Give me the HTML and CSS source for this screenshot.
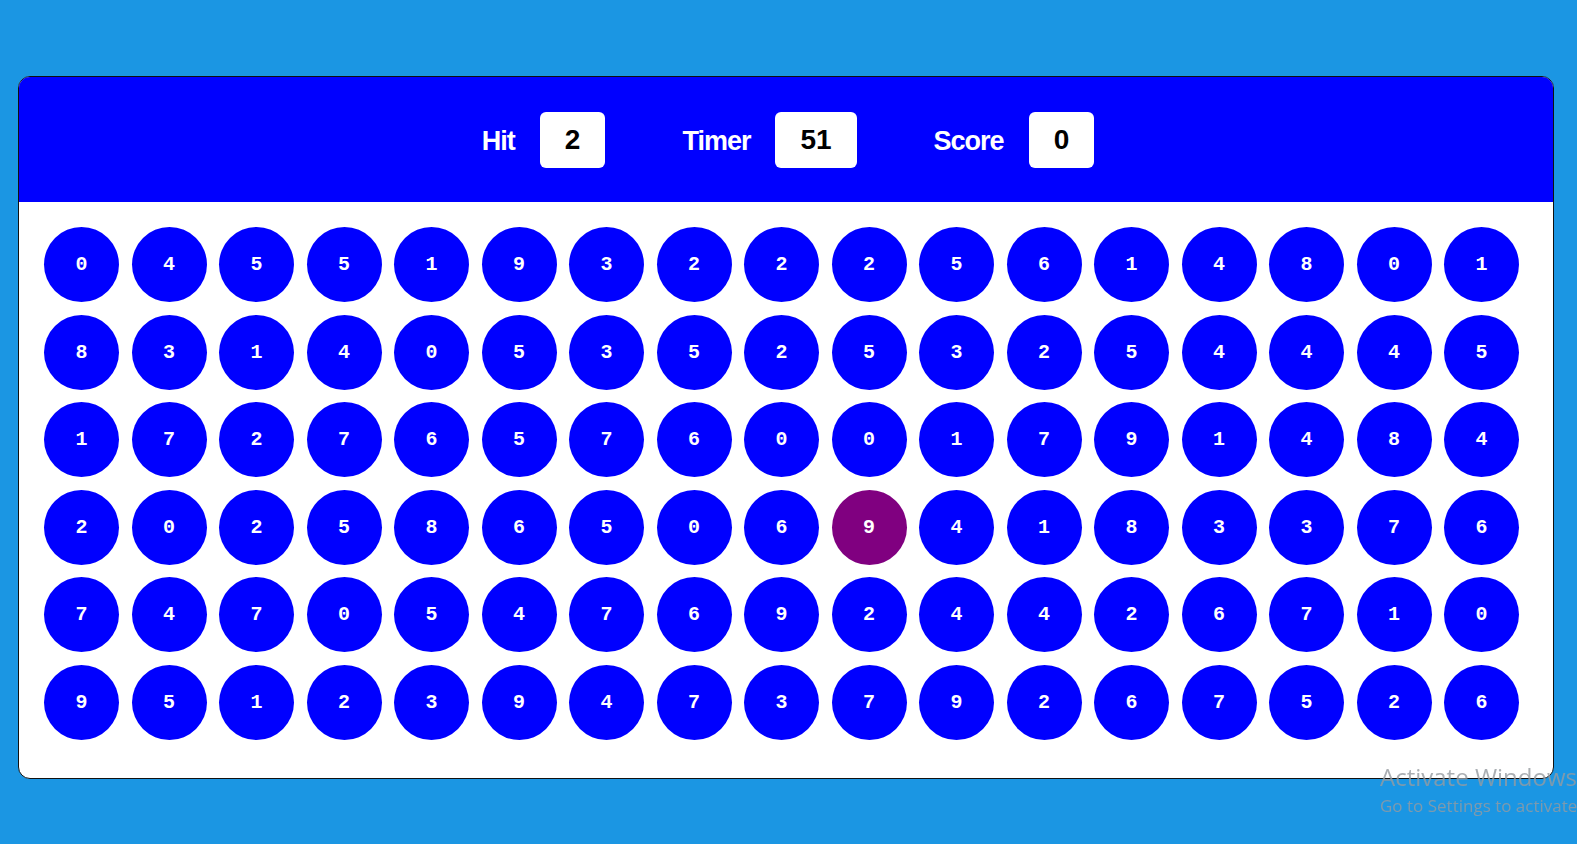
FILE: index.html
```html
<!DOCTYPE html>
<html lang="en">
<head>
<meta charset="utf-8">
<title>Bubble Game</title>
<link rel="stylesheet" href="styles.css">
</head>
<body>
<div class="panel">
  <div class="ptop">
    <div class="elem"><h2 class="label">Hit</h2><div class="box">2</div></div>
    <div class="elem"><h2 class="label">Timer</h2><div class="box">51</div></div>
    <div class="elem"><h2 class="label">Score</h2><div class="box">0</div></div>
  </div>
  <div class="pbtm">
    <div class="bubble">0</div><div class="bubble">4</div><div class="bubble">5</div><div class="bubble">5</div><div class="bubble">1</div><div class="bubble">9</div><div class="bubble">3</div><div class="bubble">2</div><div class="bubble">2</div><div class="bubble">2</div><div class="bubble">5</div><div class="bubble">6</div><div class="bubble">1</div><div class="bubble">4</div><div class="bubble">8</div><div class="bubble">0</div><div class="bubble">1</div>
    <div class="bubble">8</div><div class="bubble">3</div><div class="bubble">1</div><div class="bubble">4</div><div class="bubble">0</div><div class="bubble">5</div><div class="bubble">3</div><div class="bubble">5</div><div class="bubble">2</div><div class="bubble">5</div><div class="bubble">3</div><div class="bubble">2</div><div class="bubble">5</div><div class="bubble">4</div><div class="bubble">4</div><div class="bubble">4</div><div class="bubble">5</div>
    <div class="bubble">1</div><div class="bubble">7</div><div class="bubble">2</div><div class="bubble">7</div><div class="bubble">6</div><div class="bubble">5</div><div class="bubble">7</div><div class="bubble">6</div><div class="bubble">0</div><div class="bubble">0</div><div class="bubble">1</div><div class="bubble">7</div><div class="bubble">9</div><div class="bubble">1</div><div class="bubble">4</div><div class="bubble">8</div><div class="bubble">4</div>
    <div class="bubble">2</div><div class="bubble">0</div><div class="bubble">2</div><div class="bubble">5</div><div class="bubble">8</div><div class="bubble">6</div><div class="bubble">5</div><div class="bubble">0</div><div class="bubble">6</div><div class="bubble hover">9</div><div class="bubble">4</div><div class="bubble">1</div><div class="bubble">8</div><div class="bubble">3</div><div class="bubble">3</div><div class="bubble">7</div><div class="bubble">6</div>
    <div class="bubble">7</div><div class="bubble">4</div><div class="bubble">7</div><div class="bubble">0</div><div class="bubble">5</div><div class="bubble">4</div><div class="bubble">7</div><div class="bubble">6</div><div class="bubble">9</div><div class="bubble">2</div><div class="bubble">4</div><div class="bubble">4</div><div class="bubble">2</div><div class="bubble">6</div><div class="bubble">7</div><div class="bubble">1</div><div class="bubble">0</div>
    <div class="bubble">9</div><div class="bubble">5</div><div class="bubble">1</div><div class="bubble">2</div><div class="bubble">3</div><div class="bubble">9</div><div class="bubble">4</div><div class="bubble">7</div><div class="bubble">3</div><div class="bubble">7</div><div class="bubble">9</div><div class="bubble">2</div><div class="bubble">6</div><div class="bubble">7</div><div class="bubble">5</div><div class="bubble">2</div><div class="bubble">6</div>
  </div>
</div>
<div class="activate">
  <div class="act-title">Activate Windows</div>
  <div class="act-sub">Go to Settings to activate Windows.</div>
</div>
</body>
</html>
```

FILE: styles.css
```css
* {
  box-sizing: border-box;
}

html, body {
  margin: 0;
  padding: 0;
  width: 100%;
  height: 100%;
  overflow: hidden;
}

body {
  background-color: rgb(27, 150, 227);
  font-family: "Liberation Sans", Arial, sans-serif;
  padding: 76px 0 0 18px;
}

.panel {
  width: 1536px;
  height: 703px;
  background-color: #ffffff;
  border: 1px solid #111111;
  border-radius: 12px;
  overflow: hidden;
}

.ptop {
  height: 125px;
  background-color: #0000ff;
  display: flex;
  align-items: center;
  justify-content: center;
  gap: 77px;
  padding-left: 4px;
}

.elem {
  display: flex;
  align-items: center;
  gap: 25px;
}

.label {
  margin: 3px 0 0;
  color: #ffffff;
  font-family: "Liberation Sans", Arial, sans-serif;
  font-weight: 700;
  font-size: 27px;
  letter-spacing: -1px;
  line-height: 1;
}

.box {
  height: 56px;
  padding: 0 25px;
  background-color: #ffffff;
  color: #000000;
  border-radius: 6px;
  display: flex;
  align-items: center;
  justify-content: center;
  font-family: "Liberation Sans", Arial, sans-serif;
  font-weight: 700;
  font-size: 28px;
}

.pbtm {
  display: flex;
  flex-wrap: wrap;
  align-content: flex-start;
  gap: 12.5px;
  padding: 25px;
}

.bubble {
  width: 75px;
  height: 75px;
  border-radius: 50%;
  background-color: #0000ff;
  color: #ffffff;
  display: flex;
  align-items: center;
  justify-content: center;
  font-family: "Liberation Mono", "Courier New", monospace;
  font-weight: 700;
  font-size: 20px;
}

.bubble.hover {
  background-color: #800080;
}

.activate {
  position: fixed;
  left: 1380px;
  top: 760px;
  color: rgba(150, 155, 160, 0.8);
  font-family: "Open Sans", "Noto Sans", sans-serif;
  white-space: nowrap;
  pointer-events: none;
}

.act-title {
  font-size: 24px;
  line-height: 33px;
}

.act-sub {
  font-size: 17px;
  line-height: 26px;
}
```
